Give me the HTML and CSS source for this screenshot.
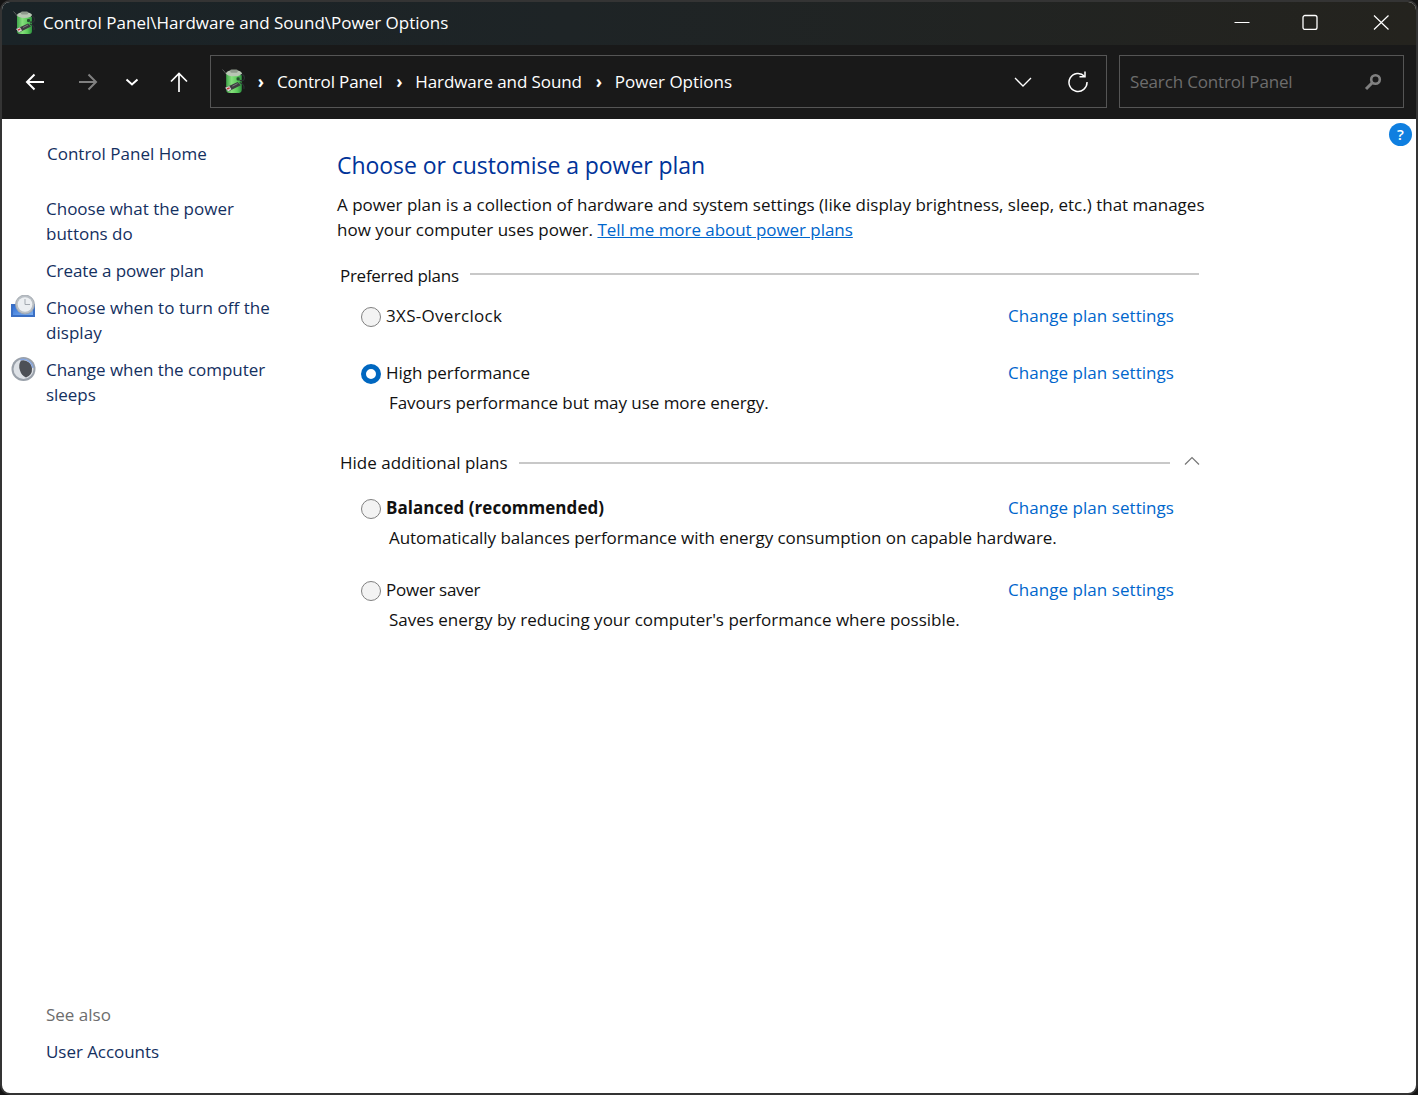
FILE: index.html
```html
<!DOCTYPE html>
<html lang="en">
<head>
<meta charset="utf-8">
<title>Power Options</title>
<link rel="stylesheet" href="styles.css">
</head>
<body>
<svg class="defs" width="0" height="0" aria-hidden="true">
  <defs>
    <linearGradient id="batt" x1="0" x2="1" y1="0" y2="0">
      <stop offset="0" stop-color="#3fa64a"/><stop offset="0.35" stop-color="#86df7c"/><stop offset="0.7" stop-color="#5ccb5c"/><stop offset="1" stop-color="#2f9040"/>
    </linearGradient>
    <symbol id="battery" viewBox="0 0 24 24">
      <path d="M0.500 0.500 Q3 3 5 6" fill="none" stroke="#6a6a6a" stroke-width="0.800"/>
      <rect x="4" y="3" width="15" height="20" rx="3" fill="url(#batt)"/>
      <ellipse cx="11.500" cy="4" rx="7.500" ry="3" fill="#b9c6b4"/>
      <rect x="8" y="0.500" width="7" height="3" rx="1.200" fill="#8f9a8c"/>
      <rect x="14" y="8" width="3" height="3" rx="1" fill="#23512c"/>
      <path d="M17 11 Q22 12 21.500 8 Q21 5 18 5.500" fill="none" stroke="#2c3033" stroke-width="1.200"/>
      <path d="M17 13 Q22 15 21 19" fill="none" stroke="#2c3033" stroke-width="1.200"/>
      <path d="M3 18 L15 12.500 L18 15.500 L6 21.500Z" fill="#3d3d40"/>
      <path d="M3 18 L7 16.200 L9 19.500 L6 21.500Z" fill="#d6d6d6"/>
      <path d="M4.500 18.400 L7 17.500 L7.600 18.600 L5.300 19.800Z" fill="#c43a3a"/>
      <path d="M10 16.500 L15 14" stroke="#8a8a8a" stroke-width="0.800"/>
    </symbol>
  </defs>
</svg>
<div class="window">
  <header class="titlebar">
    <svg class="title-icon" width="24" height="24"><use href="#battery"/></svg>
    <span class="title-text">Control Panel\Hardware and Sound\Power Options</span>
    <div class="win-controls">
      <svg class="win-btn win-min" width="16" height="16" viewBox="0 0 16 16"><path d="M0.500 8.500H15.500" stroke="#fff" stroke-width="1"/></svg>
      <svg class="win-btn" width="16" height="16" viewBox="0 0 16 16"><rect x="1" y="1.500" width="14" height="14" rx="2" fill="none" stroke="#fff" stroke-width="1.300"/></svg>
      <svg class="win-btn" width="16" height="16" viewBox="0 0 16 16"><path d="M1 1.500L15.500 15.500M15.500 1.500L1 15.500" stroke="#fff" stroke-width="1.200"/></svg>
    </div>
  </header>
  <nav class="navbar">
    <div class="nav-buttons">
      <svg class="nav-ico nav-back" width="20" height="20" viewBox="0 0 20 20"><path d="M19 10H2M9.500 2.500L2 10l7.500 7.500" fill="none" stroke="#fff" stroke-width="2"/></svg>
      <svg class="nav-ico nav-fwd" width="20" height="20" viewBox="0 0 20 20"><path d="M1 10H18M10.500 2.500L18 10l-7.500 7.500" fill="none" stroke="#808080" stroke-width="2"/></svg>
      <svg class="nav-ico nav-down" width="14" height="14" viewBox="0 0 14 14"><path d="M1.500 4.500L7 9.500l5.500-5" fill="none" stroke="#fff" stroke-width="2"/></svg>
      <svg class="nav-ico nav-up" width="20" height="20" viewBox="0 0 20 20"><path d="M10 20V2M2 9.500L10 1.500l8 8" fill="none" stroke="#fff" stroke-width="1.700"/></svg>
    </div>
    <div class="address">
      <svg class="addr-icon" width="25" height="25"><use href="#battery"/></svg>
      <span class="crumb-sep crumb-sep-first">›</span><span class="crumb crumb-tight">Control Panel</span>
      <span class="crumb-sep">›</span><span class="crumb crumb-mid">Hardware and Sound</span>
      <span class="crumb-sep">›</span><span class="crumb">Power Options</span>
      <span class="addr-spacer"></span>
      <svg class="addr-drop" width="18" height="10" viewBox="0 0 18 10"><path d="M1 1l8 8 8-8" fill="none" stroke="#fff" stroke-width="1.300"/></svg>
      <svg class="addr-refresh" width="22" height="22" viewBox="0 0 22 22"><path d="M17.500 5.200A9 9 0 1 0 20 11" fill="none" stroke="#fff" stroke-width="1.500"/><path d="M12.500 5.700H18V0.500" fill="none" stroke="#fff" stroke-width="1.500"/></svg>
    </div>
    <div class="search">
      <span class="search-text">Search Control Panel</span>
      <svg width="18" height="18" viewBox="0 0 18 18"><circle cx="11.500" cy="6.500" r="4.300" fill="none" stroke="#808080" stroke-width="2.600"/><path d="M8 10L2 16" stroke="#808080" stroke-width="3"/></svg>
    </div>
  </nav>
  <div class="body-area">
    <aside class="sidebar">
      <div class="side-home">Control Panel Home</div>
      <ul class="side-tasks">
        <li class="side-item">Choose what the power<br>buttons do</li>
        <li class="side-item side-create">Create a power plan</li>
        <li class="side-item side-has-icon">
          <svg class="side-icon" width="26" height="26" viewBox="0 0 26 26">
            <defs><linearGradient id="scr" x1="0" x2="1" y1="0" y2="1"><stop offset="0" stop-color="#2f6fd6"/><stop offset="1" stop-color="#7fb0ee"/></linearGradient></defs>
            <path d="M0 9H24V22H0Z" fill="#3a6fc4"/>
            <path d="M2 11H22V20H2Z" fill="url(#scr)"/>
            <circle cx="14" cy="9.500" r="9.500" fill="#b9bfc5" stroke="#9ea5ac" stroke-width="0.800"/>
            <circle cx="14" cy="9.500" r="7.300" fill="#eceff2"/>
            <path d="M14 4V9.500H19" fill="none" stroke="#a3a9b0" stroke-width="1"/>
          </svg>
          <span class="side-turnoff">Choose when to turn off the<br>display</span>
        </li>
        <li class="side-item side-has-icon">
          <svg class="side-icon" width="26" height="26" viewBox="0 0 26 26">
            <circle cx="12.500" cy="12" r="12" fill="#9aa1aa"/>
            <circle cx="12.500" cy="12" r="10" fill="#dde1e6"/>
            <path d="M10 3.500a9 9 0 0 1 11 8a9 9 0 0 1-6 9a11 11 0 0 1-6-7a11 11 0 0 1 1-10Z" fill="#4d5056"/>
            <path d="M9 2.800a10 10 0 0 1 13 8" fill="none" stroke="#86a6e0" stroke-width="1.500"/>
          </svg>
          <span class="side-sleep">Change when the computer<br>sleeps</span>
        </li>
      </ul>
      <div class="side-spacer"></div>
      <div class="side-seealso">See also</div>
      <div class="side-foot">User Accounts</div>
    </aside>
    <main class="content">
      <h1 class="heading">Choose or customise a power plan</h1>
      <p class="intro">A power plan is a collection of hardware and system settings (like display brightness, sleep, etc.) that manages<br>how your computer uses power. <a class="link-under" href="#">Tell me more about power plans</a></p>

      <div class="group-head group-first"><span class="group-first-label">Preferred plans</span><i class="rule"></i></div>
      <div class="plan plan-first">
        <span class="radio"></span><span class="plan-name plan-wide">3XS-Overclock</span><a class="plan-link" href="#">Change plan settings</a>
      </div>
      <div class="plan plan-second">
        <span class="radio radio-on"></span><span class="plan-name">High performance</span><a class="plan-link" href="#">Change plan settings</a>
        <span class="plan-desc plan-desc-tight">Favours performance but may use more energy.</span>
      </div>

      <div class="group-head group-second"><span>Hide additional plans</span><i class="rule"></i>
        <svg class="collapse" width="16" height="9" viewBox="0 0 16 9"><path d="M1 8.500L8 1.500l7 7" fill="none" stroke="#767676" stroke-width="1.200"/></svg>
      </div>
      <div class="plan plan-third">
        <span class="radio"></span><span class="plan-name plan-bold">Balanced (recommended)</span><a class="plan-link" href="#">Change plan settings</a>
        <span class="plan-desc plan-desc-tight">Automatically balances performance with energy consumption on capable hardware.</span>
      </div>
      <div class="plan plan-fourth">
        <span class="radio"></span><span class="plan-name plan-saver">Power saver</span><a class="plan-link" href="#">Change plan settings</a>
        <span class="plan-desc">Saves energy by reducing your computer's performance where possible.</span>
      </div>
    </main>
    <div class="help">?</div>
  </div>
</div>
</body>
</html>
```
FILE: styles.css
```css
* { box-sizing: border-box; }
html, body { height: 100%; margin: 0; background: #141414; }
body { font-family: "Open Sans", "Noto Sans", sans-serif; font-size: 17px; line-height: 25px; color: #111; overflow: hidden; }
.defs { position: absolute; }
.window { height: 1095px; border: 2px solid #343434; border-radius: 10px; display: flex; flex-direction: column; overflow: hidden; background: #fff; }
.titlebar { height: 43px; flex: none; display: flex; align-items: center; padding: 0 0 3px 11px; background: linear-gradient(90deg, #1a2327 0%, #1e2426 40%, #24231e 100%); color: #fff; }
.title-icon { flex: none; margin-top: 1px; }
.title-text { margin-left: 6px; white-space: nowrap; }
.win-controls { margin-left: auto; display: flex; gap: 55px; padding-right: 27px; }
.win-btn { display: block; }
.win-min { margin-right: -3px; }
.navbar { height: 74px; flex: none; background: #191919; display: flex; align-items: flex-start; padding-top: 10px; color: #fff; }
.nav-buttons { width: 208px; height: 53px; flex: none; display: flex; align-items: center; }
.nav-ico { display: block; flex: none; }
.nav-back { margin-left: 23px; }
.nav-fwd { margin-left: 33px; }
.nav-down { margin-left: 27px; }
.nav-up { margin-left: 30px; }
.address { width: 897px; height: 53px; flex: none; border: 1px solid #555; display: flex; align-items: center; padding-left: 11px; white-space: nowrap; }
.addr-icon { flex: none; }
.crumb-sep { width: 14px; margin-left: 10px; font-weight: 700; text-align: center; }
.crumb-sep-first { margin-left: 7px; }
.crumb { margin-left: 9px; }
.crumb-tight { letter-spacing: -0.15px; }
.crumb-mid { letter-spacing: -0.1px; }
.addr-spacer { flex: 1; }
.addr-drop { flex: none; margin-right: 35px; }
.addr-refresh { flex: none; margin-right: 17px; }
.search { width: 285px; height: 53px; margin-left: 12px; flex: none; border: 1px solid #555; display: flex; align-items: center; justify-content: space-between; padding: 0 21px 0 10px; }
.search-text { color: #6d6d6d; white-space: nowrap; letter-spacing: -0.15px; }
.body-area { flex: 1; display: flex; position: relative; min-height: 0; }
.sidebar { width: 335px; flex: none; padding: 22px 0 29px 44px; display: flex; flex-direction: column; color: #14305f; }
.side-home { margin-left: 1px; }
.side-tasks { list-style: none; margin: 30px 0 0; padding: 0; display: flex; flex-direction: column; gap: 12px; }
.side-item { white-space: nowrap; }
.side-create { letter-spacing: -0.1px; }
.side-turnoff { letter-spacing: 0.04px; }
.side-sleep { letter-spacing: -0.04px; }
.side-has-icon { display: flex; margin-left: -35px; gap: 9px; }
.side-icon { flex: none; display: block; }
.side-spacer { flex: 1; }
.side-seealso { color: #6d6d6d; }
.side-foot { margin-top: 12px; letter-spacing: -0.05px; }
.content { flex: 1; padding: 30px 0 0 0; min-width: 0; }
.heading { margin: 0; font-size: 23px; line-height: 32px; font-weight: 400; color: #003399; letter-spacing: -0.06px; }
.intro { margin: 11px 0 0; white-space: nowrap; }
.link-under { color: #0066cc; text-decoration: underline; letter-spacing: -0.05px; }
.group-head { width: 859px; margin-left: 3px; display: flex; align-items: center; gap: 11px; white-space: nowrap; }
.group-first { margin-top: 21px; }
.group-first-label { letter-spacing: -0.28px; }
.group-first .rule { margin-top: -4px; }
.group-second { width: 860px; margin-top: 35px; }
.rule { flex: 1; height: 2px; background: #c8c8c8; }
.collapse { flex: none; margin: -4px 0 0 3px; }
.plan { width: 838px; margin-left: 24px; display: grid; grid-template-columns: 20px 1fr 191px; column-gap: 5px; align-items: center; }
.plan-first { margin-top: 15px; }
.plan-second { margin-top: 32px; }
.plan-third { margin-top: 20px; }
.plan-fourth { margin-top: 27px; }
.radio { width: 20px; height: 20px; border-radius: 50%; border: 1.500px solid #808080; background: #f3f3f3; margin-top: 2px; }
.radio-on { border: 5px solid #0067c0; background: #fff; }
.plan-name { white-space: nowrap; }
.plan-wide { letter-spacing: 0.3px; }
.plan-saver { letter-spacing: -0.25px; }
.plan-bold { font-weight: 700; letter-spacing: 0.05px; }
.plan-link { color: #0066cc; text-decoration: none; white-space: nowrap; letter-spacing: 0.05px; }
.plan-desc { grid-column: 1 / -1; margin: 5px 0 0 28px; white-space: nowrap; }
.plan-desc-tight { letter-spacing: -0.05px; }
.help { position: absolute; top: 4px; right: 4px; width: 23px; height: 23px; border-radius: 50%; background: #0f7fe0; color: #fff; font-size: 15px; line-height: 23px; text-align: center; font-weight: 600; }
```
